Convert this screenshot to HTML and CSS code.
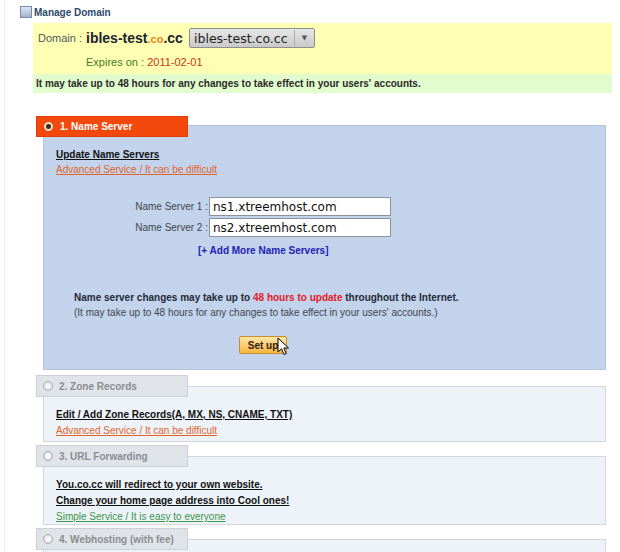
FILE: index.html
```html
<!DOCTYPE html>
<html lang="en">
<head>
    <meta charset="UTF-8">
    <meta name="viewport" content="width=device-width, initial-scale=1.0">
    <title>Manage Domain</title>
    <link rel="stylesheet" href="styles.css">
</head>
<body>

<div class="page">
    <h1 class="title"><span class="title-icon"></span>Manage Domain</h1>

    <div class="domain-box">
        <div class="domain-row">
            <span class="domain-label">Domain :</span>
            <span class="domain-name">ibles-test<span class="dot-co">.co</span>.cc</span>
            <div class="domain-select">
                <span class="select-text">ibles-test.co.cc</span>
                <span class="select-arrow">&#9660;</span>
            </div>
        </div>
        <div class="expires">Expires on : <span class="expires-date">2011-02-01</span></div>
    </div>
    <div class="notice">It may take up to 48 hours for any changes to take effect in your users' accounts.</div>

    <!-- 1. Name Server -->
    <div class="service active">
        <div class="tab"><span class="radio"></span>1. Name Server</div>
        <div class="panel panel-ns">
            <a class="panel-title" href="#">Update Name Servers</a>
            <a class="hint hard" href="#">Advanced Service / It can be difficult</a>

            <div class="ns-form">
                <div class="ns-row">
                    <label for="ns1">Name Server 1 :</label>
                    <input type="text" id="ns1" value="ns1.xtreemhost.com">
                </div>
                <div class="ns-row">
                    <label for="ns2">Name Server 2 :</label>
                    <input type="text" id="ns2" value="ns2.xtreemhost.com">
                </div>
            </div>
            <a class="add-more" href="#">[+ Add More Name Servers]</a>

            <p class="ns-note"><b>Name server changes may take up to <span class="red">48 hours to update</span> throughout the Internet.</b><br>
                (It may take up to 48 hours for any changes to take effect in your users' accounts.)</p>

            <div class="setup-wrap">
                <button type="button" class="setup-btn">Set up</button>
                <svg class="cursor" width="13" height="20" viewBox="0 0 13 20">
                    <path d="M1 1 L1 15 L4.5 11.8 L7 17.5 L9.2 16.5 L6.8 11 L11.5 11 Z" fill="#fff" stroke="#000" stroke-width="1" stroke-linejoin="round"/>
                </svg>
            </div>
        </div>
    </div>

    <!-- 2. Zone Records -->
    <div class="service">
        <div class="tab"><span class="radio"></span>2. Zone Records</div>
        <div class="panel panel-zone">
            <a class="panel-title" href="#">Edit / Add Zone Records(A, MX, NS, CNAME, TXT)</a>
            <a class="hint hard" href="#">Advanced Service / It can be difficult</a>
        </div>
    </div>

    <!-- 3. URL Forwarding -->
    <div class="service">
        <div class="tab"><span class="radio"></span>3. URL Forwarding</div>
        <div class="panel panel-url">
            <a class="panel-title" href="#">You.co.cc will redirect to your own website.</a>
            <a class="panel-title" href="#">Change your home page address into Cool ones!</a>
            <a class="hint easy" href="#">Simple Service / It is easy to everyone</a>
        </div>
    </div>

    <!-- 4. Webhosting -->
    <div class="service">
        <div class="tab"><span class="radio"></span>4. Webhosting (with fee)</div>
        <div class="panel panel-host"></div>
    </div>
</div>

</body>
</html>
```

FILE: styles.css
```css
body {
    margin: 0;
    padding: 0;
    background-color: #ffffff;
    font-family: 'Liberation Sans', Arial, sans-serif;
    font-size: 10px;
    color: #222;
    overflow: hidden;
}

.page {
    width: 620px;
    height: 552px;
    box-sizing: border-box;
    padding-top: 5px;
    border-left: 1px solid #eeeeee;
    margin-left: 4px;
}

.title {
    display: flex;
    align-items: center;
    margin: 0 0 0 15px;
    height: 14px;
    font-size: 10px;
    font-weight: bold;
    color: #2d4a6b;
}

.title-icon {
    width: 10px;
    height: 10px;
    border: 1px solid #7a8aa6;
    background: linear-gradient(#dfe7f3, #9fb2cf);
    margin-right: 2px;
}

/* domain header */
.domain-box {
    margin: 4px 0 0 28px;
    width: 579px;
    height: 51px;
    background-color: #ffffb4;
    box-sizing: border-box;
    padding: 5px 0 0 5px;
}

.domain-row {
    display: flex;
    align-items: center;
    height: 20px;
    white-space: nowrap;
}

.domain-label {
    flex: none;
    width: 48px;
    font-size: 11px;
    color: #4d5a66;
}

.domain-name {
    flex: none;
    width: 103px;
    font-size: 14px;
    font-weight: bold;
    color: #1d2530;
}

.dot-co {
    font-size: 11px;
    color: #e8861a;
}

.domain-select {
    flex: none;
    display: flex;
    align-items: center;
    width: 126px;
    height: 20px;
    box-sizing: border-box;
    border: 1px solid #8e8e8e;
    border-radius: 2px;
    background: linear-gradient(#e6e6e6, #c9c9c9);
    font-family: 'DejaVu Sans', sans-serif;
}

.select-text {
    flex: 1;
    padding-left: 4px;
    font-size: 12.5px;
    color: #222;
}

.select-arrow {
    width: 19px;
    height: 16px;
    line-height: 16px;
    text-align: center;
    border-left: 1px solid #aaa;
    font-size: 7px;
    color: #555;
}

.expires {
    margin: 7px 0 0 48px;
    line-height: 14px;
    font-size: 11px;
    color: #3f7d2a;
}

.expires-date {
    color: #c8361a;
}

.notice {
    margin-left: 28px;
    width: 579px;
    height: 19px;
    line-height: 19px;
    box-sizing: border-box;
    padding-left: 3px;
    background-color: #e2fccd;
    font-weight: bold;
    color: #2a2a2a;
}

/* service sections */
.service {
    margin-left: 31px;
    margin-top: 3px;
}

.service.active {
    margin-top: 23px;
}

.service.active + .service {
    margin-top: 5px;
}

.tab {
    position: relative;
    z-index: 2;
    display: flex;
    align-items: center;
    width: 152px;
    height: 22px;
    margin-bottom: -11px;
    box-sizing: border-box;
    padding-left: 6px;
    background-color: #e0e3e8;
    border: 1px solid #cdd1d7;
    font-weight: bold;
    color: #8a8d92;
}

.radio {
    width: 8px;
    height: 8px;
    margin-right: 6px;
    border-radius: 50%;
    border: 1px solid #a9adb3;
    background: radial-gradient(#ffffff, #d6d8dc);
}

.active .tab {
    height: 21px;
    margin-bottom: -12px;
    background-color: #f2480c;
    border-color: #e23d06;
    color: #ffffff;
}

.active .radio {
    border: 2px solid #f3e3c6;
    width: 5px;
    height: 5px;
    background: #3a2a20;
    margin-left: 1px;
    margin-right: 7px;
}

.panel {
    margin-left: 7px;
    width: 563px;
    box-sizing: border-box;
    padding: 20px 0 2px 12px;
    background-color: #eef2f9;
    border: 1px solid #d3d7dd;
}

.panel a {
    display: block;
    line-height: 16px;
    width: max-content;
}

.panel-title {
    font-weight: bold;
    color: #111;
    text-decoration: underline;
}

.hint.hard {
    color: #e0652c;
}

.hint.easy {
    color: #3a9648;
}

.panel-url {
    padding-top: 20px;
    padding-bottom: 0;
}

.panel-url a {
    line-height: 15px;
}

.panel-url .panel-title + .panel-title {
    line-height: 17px;
}

.panel-host {
    height: 40px;
}

/* name server panel */
.panel-ns {
    padding-top: 21px;
    padding-bottom: 15px;
    background-color: #c3d3eb;
    border-color: #b6c5dc;
}

.panel-ns a {
    line-height: 15px;
}

.ns-form {
    margin-top: 20px;
    display: flex;
    flex-direction: column;
    gap: 2px;
}

.ns-row {
    display: flex;
    align-items: center;
}

.ns-row label {
    width: 152px;
    text-align: right;
    padding-right: 1px;
    color: #3d4650;
}

.ns-row input {
    width: 182px;
    height: 19px;
    box-sizing: border-box;
    margin: 0;
    padding: 0 3px;
    border: 1px solid #8a929c;
    background: #ffffff;
    font-family: 'DejaVu Sans', sans-serif;
    font-size: 12px;
    color: #111;
}

.panel-ns .add-more {
    margin: 6px 0 0 142px;
    font-weight: bold;
    color: #2222b4;
    text-decoration: none;
}

.ns-note {
    margin: 32px 0 0 18px;
    line-height: 15px;
    color: #3d4650;
}

.ns-note b {
    color: #1f2a3a;
}

.red {
    color: #e0202a;
}

.setup-wrap {
    position: relative;
    margin: 16px 0 0 183px;
    width: 48px;
}

.setup-btn {
    display: block;
    width: 48px;
    height: 18px;
    padding: 0;
    border: 1px solid #c8902a;
    border-radius: 2px;
    background: linear-gradient(#ffe6a6, #f8b43e);
    font-family: 'Liberation Sans', Arial, sans-serif;
    font-size: 10px;
    font-weight: bold;
    color: #2a2010;
}

.cursor {
    position: absolute;
    left: 38px;
    top: 1px;
}
```
